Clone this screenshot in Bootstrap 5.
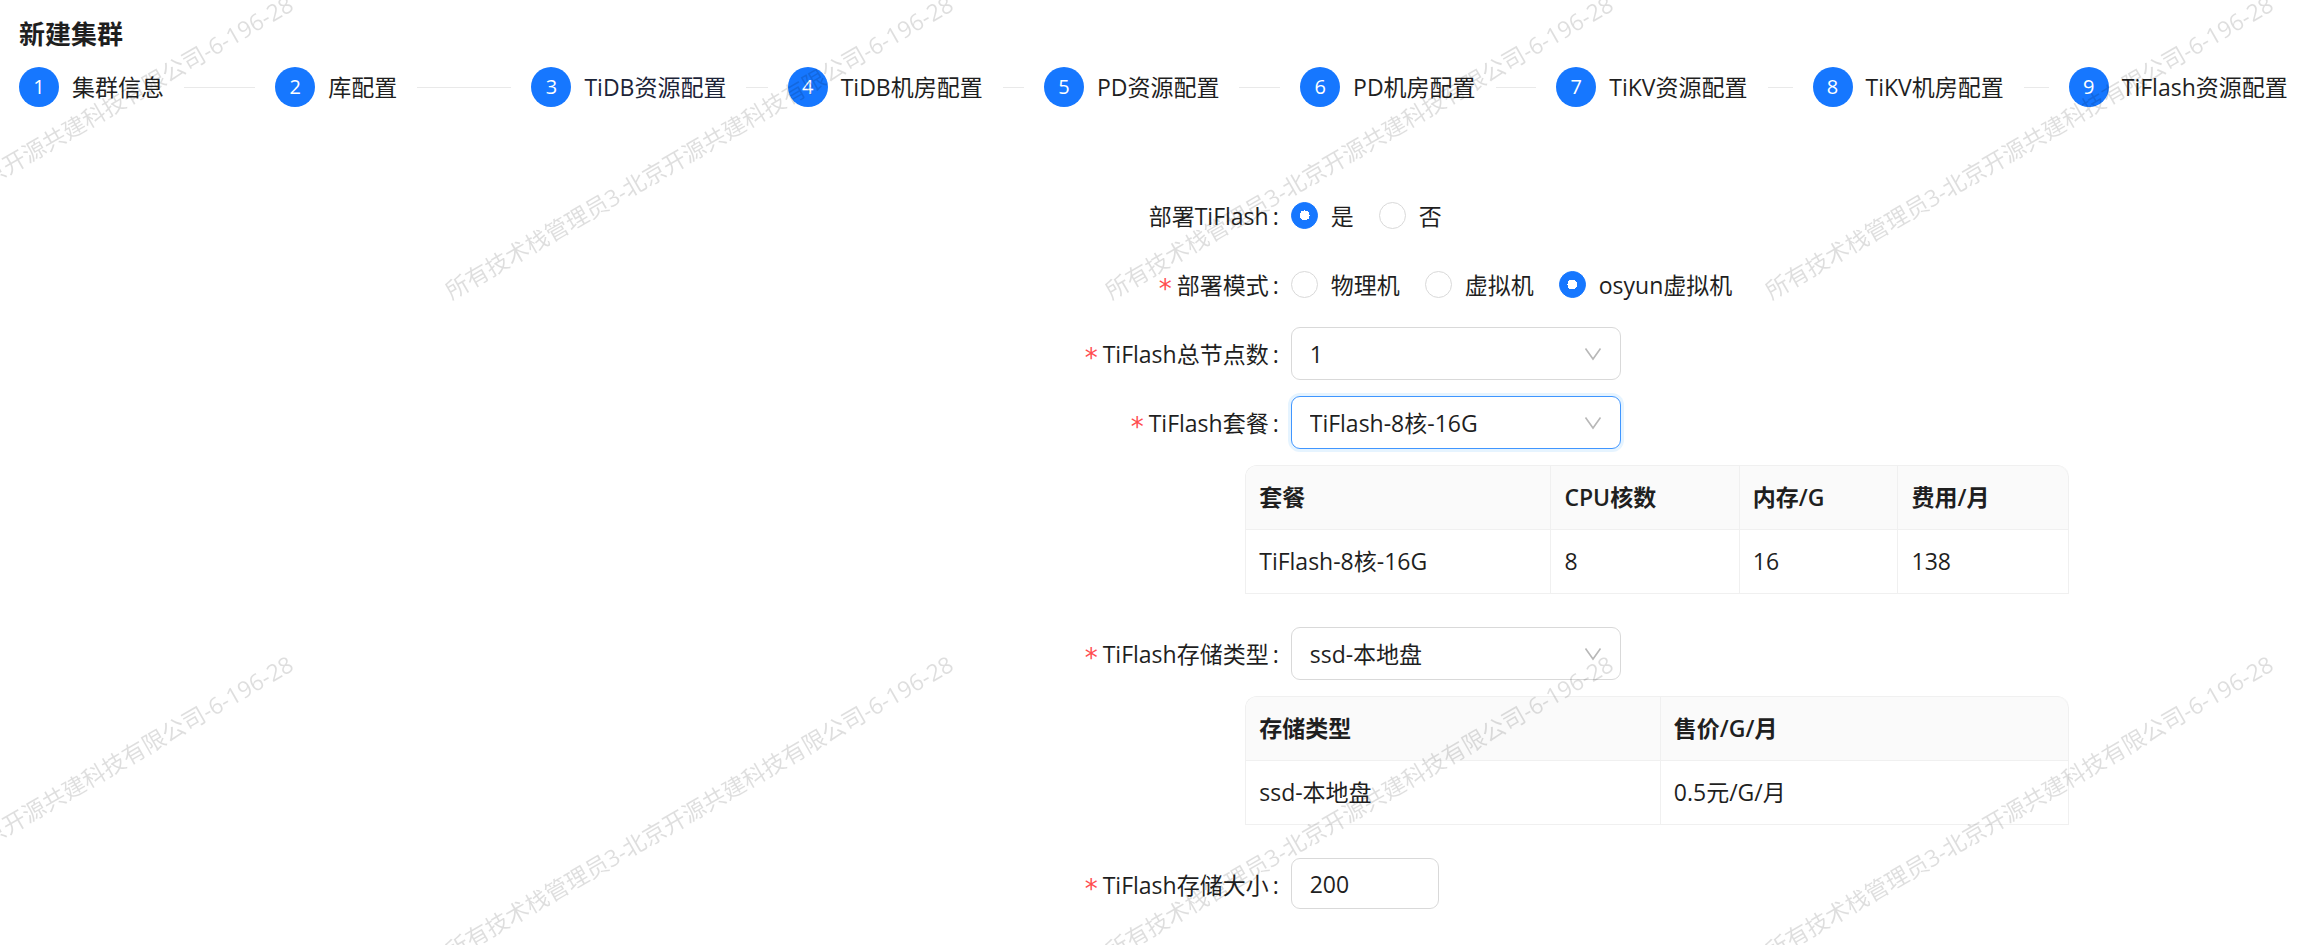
<!DOCTYPE html>
<html lang="zh-CN">
<head>
<meta charset="utf-8">
<meta name="viewport" content="width=device-width, initial-scale=1">
<title>新建集群</title>
<link href="https://cdn.jsdelivr.net/npm/bootstrap@5.3.0/dist/css/bootstrap.min.css" rel="stylesheet">
<style>
  :root {
    --brand: #1677ff;
    --ink: #1f1f1f;
    --line: #d9d9d9;
    --line-soft: #f0f0f0;
  }
  body {
    font-family: "Open Sans", "Noto Sans CJK SC", sans-serif;
    font-size: 23px;
    line-height: 36px;
    color: var(--ink);
    background: #fff;
    overflow-x: hidden;
  }
  .page { padding: 16px 19px 34px; overflow: hidden; }
  .page-title { font-size: 26px; line-height: 36px; font-weight: 700; margin: 0 0 15px; }

  /* Steps */
  .steps { margin-right: -31px; margin-bottom: 82px; }
  .step { flex: 1 1 0; min-width: 0; padding-right: 20px; gap: 13px; white-space: nowrap; }
  .step-no {
    flex: none; width: 40px; height: 40px; font-size: 20px;
    background: var(--brand); color: #fff;
  }
  .step-name { gap: 20px; }
  .step-name::after { content: ""; flex: 1 1 0; height: 1px; background: #e9e9e9; }
  .step-current { color: #1c2438; }

  /* Form */
  .form-line { display: grid; grid-template-columns: 55.9% 1fr; margin-bottom: 16px; }
  .caption {
    display: flex; justify-content: flex-end; align-items: center;
    height: 53px; padding: 0 12px 0 0; white-space: nowrap;
  }
  .caption::after { content: ":"; margin-left: 4px; }
  .need { font-family: "DejaVu Sans", sans-serif; color: #ff4d4f; font-size: 26px; padding-top: 8px; margin-right: 5px; }
  .choices { gap: 25px; min-height: 53px; }
  .choice { display: flex; align-items: center; gap: 13px; }
  .choice .form-check-input {
    width: 27px; height: 27px; margin: 0; border-color: var(--line);
  }
  .choice .form-check-input:checked {
    background-color: var(--brand); border-color: var(--brand);
    background-image: radial-gradient(circle, #fff 0 5px, transparent 5px);
  }
  .field {
    font-size: 23px; line-height: 36px; color: var(--ink);
    border: 1px solid var(--line); border-radius: 9px; padding: 7px 18px;
  }
  .field.form-select {
    width: 330px; height: 53px;
    background-image: url("data:image/svg+xml,%3Csvg xmlns='http://www.w3.org/2000/svg' viewBox='0 0 18 14' fill='none' stroke='%23b8b8b8' stroke-width='1.6'%3E%3Cpath d='M1.5 1.5 9 12 16.5 1.5'/%3E%3C/svg%3E");
    background-size: 18px 14px; background-position: right 18px center;
  }
  .field.form-control { width: 148px; height: 51px; }
  .field.is-active { border-color: #4096ff; box-shadow: 0 0 0 3px rgba(5, 145, 255, .1); }

  /* Tables */
  .price-table {
    margin: 0 0 33px 53.9%; width: 36.2%; color: var(--ink);
    border-collapse: separate; border-spacing: 0; table-layout: fixed;
    border: solid var(--line-soft); border-width: 1px 0 0 1px; border-radius: 12px 12px 0 0;
  }
  .price-table th, .price-table td {
    height: 64px; padding: 0 13px 2px; vertical-align: middle;
    border: solid var(--line-soft); border-width: 0 1px 1px 0;
  }
  .price-table th { background: #fafafa; font-weight: 600; }
  .price-table th:first-child { border-top-left-radius: 11px; }
  .price-table th:last-child { border-top-right-radius: 12px; }

  /* Watermark laid over the whole page */
  .watermark { position: fixed; inset: 0; overflow: hidden; pointer-events: none; z-index: 10; }
  .watermark-grid {
    display: grid; grid-template-columns: repeat(5, 660px); grid-auto-rows: 660px;
    margin: -183px 0 0 -291px;
  }
  .watermark-grid span {
    place-self: center; white-space: nowrap; color: rgba(0, 0, 0, .13);
    transform: rotate(-30deg);
  }
</style>
</head>
<body>
<main class="page">
  <h1 class="page-title">新建集群</h1>

  <ol class="steps list-unstyled d-flex">
    <li class="step d-flex align-items-center"><span class="step-no rounded-circle d-flex align-items-center justify-content-center">1</span><span class="step-name d-flex align-items-center flex-grow-1">集群信息</span></li>
    <li class="step d-flex align-items-center"><span class="step-no rounded-circle d-flex align-items-center justify-content-center">2</span><span class="step-name d-flex align-items-center flex-grow-1">库配置</span></li>
    <li class="step d-flex align-items-center"><span class="step-no rounded-circle d-flex align-items-center justify-content-center">3</span><span class="step-name step-current d-flex align-items-center flex-grow-1">TiDB资源配置</span></li>
    <li class="step d-flex align-items-center"><span class="step-no rounded-circle d-flex align-items-center justify-content-center">4</span><span class="step-name d-flex align-items-center flex-grow-1">TiDB机房配置</span></li>
    <li class="step d-flex align-items-center"><span class="step-no rounded-circle d-flex align-items-center justify-content-center">5</span><span class="step-name d-flex align-items-center flex-grow-1">PD资源配置</span></li>
    <li class="step d-flex align-items-center"><span class="step-no rounded-circle d-flex align-items-center justify-content-center">6</span><span class="step-name d-flex align-items-center flex-grow-1">PD机房配置</span></li>
    <li class="step d-flex align-items-center"><span class="step-no rounded-circle d-flex align-items-center justify-content-center">7</span><span class="step-name d-flex align-items-center flex-grow-1">TiKV资源配置</span></li>
    <li class="step d-flex align-items-center"><span class="step-no rounded-circle d-flex align-items-center justify-content-center">8</span><span class="step-name d-flex align-items-center flex-grow-1">TiKV机房配置</span></li>
    <li class="step d-flex align-items-center"><span class="step-no rounded-circle d-flex align-items-center justify-content-center">9</span><span class="step-name d-flex align-items-center flex-grow-1">TiFlash资源配置</span></li>
  </ol>

  <form>
    <div class="form-line" role="radiogroup" aria-labelledby="deploy-label">
      <span class="caption" id="deploy-label">部署TiFlash</span>
      <div class="choices d-flex align-items-center">
        <label class="choice"><input class="form-check-input" type="radio" name="deploy" checked>是</label>
        <label class="choice"><input class="form-check-input" type="radio" name="deploy">否</label>
      </div>
    </div>

    <div class="form-line" role="radiogroup" aria-labelledby="mode-label">
      <span class="caption" id="mode-label"><span class="need">*</span>部署模式</span>
      <div class="choices d-flex align-items-center">
        <label class="choice"><input class="form-check-input" type="radio" name="mode">物理机</label>
        <label class="choice"><input class="form-check-input" type="radio" name="mode">虚拟机</label>
        <label class="choice"><input class="form-check-input" type="radio" name="mode" checked>osyun虚拟机</label>
      </div>
    </div>

    <div class="form-line">
      <label class="caption" for="nodes"><span class="need">*</span>TiFlash总节点数</label>
      <select class="form-select field" id="nodes"><option>1</option></select>
    </div>

    <div class="form-line">
      <label class="caption" for="plan"><span class="need">*</span>TiFlash套餐</label>
      <select class="form-select field is-active" id="plan"><option>TiFlash-8核-16G</option></select>
    </div>

    <table class="price-table">
      <colgroup><col style="width:37.1%"><col style="width:22.9%"><col style="width:19.3%"><col></colgroup>
      <thead><tr><th scope="col">套餐</th><th scope="col">CPU核数</th><th scope="col">内存/G</th><th scope="col">费用/月</th></tr></thead>
      <tbody><tr><td>TiFlash-8核-16G</td><td>8</td><td>16</td><td>138</td></tr></tbody>
    </table>

    <div class="form-line">
      <label class="caption" for="disk"><span class="need">*</span>TiFlash存储类型</label>
      <select class="form-select field" id="disk"><option>ssd-本地盘</option></select>
    </div>

    <table class="price-table">
      <colgroup><col style="width:50.4%"><col></colgroup>
      <thead><tr><th scope="col">存储类型</th><th scope="col">售价/G/月</th></tr></thead>
      <tbody><tr><td>ssd-本地盘</td><td>0.5元/G/月</td></tr></tbody>
    </table>

    <div class="form-line mb-0">
      <label class="caption" for="size"><span class="need">*</span>TiFlash存储大小</label>
      <input class="form-control field" id="size" type="text" inputmode="numeric" value="200">
    </div>
  </form>
</main>

<div class="watermark" aria-hidden="true">
  <div class="watermark-grid">
    <span>所有技术栈管理员3-北京开源共建科技有限公司-6-196-28</span>
    <span>所有技术栈管理员3-北京开源共建科技有限公司-6-196-28</span>
    <span>所有技术栈管理员3-北京开源共建科技有限公司-6-196-28</span>
    <span>所有技术栈管理员3-北京开源共建科技有限公司-6-196-28</span>
    <span></span>
    <span>所有技术栈管理员3-北京开源共建科技有限公司-6-196-28</span>
    <span>所有技术栈管理员3-北京开源共建科技有限公司-6-196-28</span>
    <span>所有技术栈管理员3-北京开源共建科技有限公司-6-196-28</span>
    <span>所有技术栈管理员3-北京开源共建科技有限公司-6-196-28</span>
  </div>
</div>
<script src="https://cdn.jsdelivr.net/npm/bootstrap@5.3.0/dist/js/bootstrap.bundle.min.js"></script>
</body>
</html>
